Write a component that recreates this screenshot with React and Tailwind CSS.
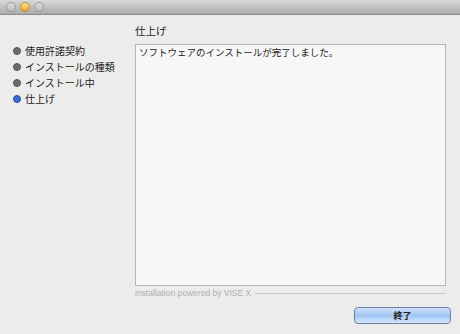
export default function App() {
  const steps = ['使用許諾契約', 'インストールの種類', 'インストール中', '仕上げ'];

  return (
    <div
      className="w-[460px] h-[334px] bg-[#ececec] flex flex-col overflow-hidden text-[#222]"
      style={{ fontFamily: '"Noto Sans CJK JP", "Liberation Sans", sans-serif' }}
    >
      {/* title bar */}
      <div className="h-[15px] shrink-0 bg-gradient-to-b from-[#d8d8d8] to-[#ababab] border-b border-[#8c8c8c] flex items-center gap-[4px] pl-[6px]">
        <span className="w-[10px] h-[10px] rounded-full bg-gradient-to-b from-[#dcdcdc] to-[#bcbcbc] border border-[#9a9a9a]" />
        <span className="w-[10px] h-[10px] rounded-full bg-gradient-to-b from-[#fbe28a] to-[#e9a628] border border-[#c08a2a]" />
        <span className="w-[10px] h-[10px] rounded-full bg-gradient-to-b from-[#dcdcdc] to-[#bcbcbc] border border-[#9a9a9a]" />
      </div>

      <div className="flex flex-1">
        {/* sidebar */}
        <div className="w-[135px] shrink-0 pt-[30px] pl-[13px] flex flex-col gap-[4px]">
          {steps.map((s, i) => (
            <div key={s} className="flex items-center gap-[4px] h-[12px] text-[10px] leading-none">
              <span
                className={`w-[8px] h-[8px] rounded-full border ${
                  i === 3 ? 'bg-[#3b6fd0] border-[#2450a0]' : 'bg-[#6a6a6a] border-[#555]'
                }`}
              />
              <span>{s}</span>
            </div>
          ))}
        </div>

        {/* main */}
        <div className="flex-1 flex flex-col pr-[14px]">
          <div className="h-[29px] pt-[11px] text-[10.5px] leading-none">仕上げ</div>
          <div className="h-[242px] bg-[#f7f7f7] border border-[#b5b5b5] px-[3px] pt-[2px] text-[9.5px] leading-tight">
            ソフトウェアのインストールが完了しました。
          </div>
          <div className="flex items-center gap-[4px] mt-[1px] h-[12px]">
            <span className="text-[8.5px] text-[#b0b0b0] leading-none" style={{ fontFamily: '"Liberation Sans", sans-serif' }}>
              installation powered by VISE X
            </span>
            <span className="flex-1 h-px bg-[#c8c8c8]" />
          </div>
          <div className="flex justify-end mt-[8px] mr-[-5px]">
            <button className="w-[97px] h-[17px] rounded-[4px] border border-[#6f7f9f] bg-gradient-to-b from-[#cfe3fb] via-[#9fc5f3] to-[#d6e8fc] text-[9px] font-bold leading-none text-[#222]">
              終了
            </button>
          </div>
        </div>
      </div>
    </div>
  );
}
